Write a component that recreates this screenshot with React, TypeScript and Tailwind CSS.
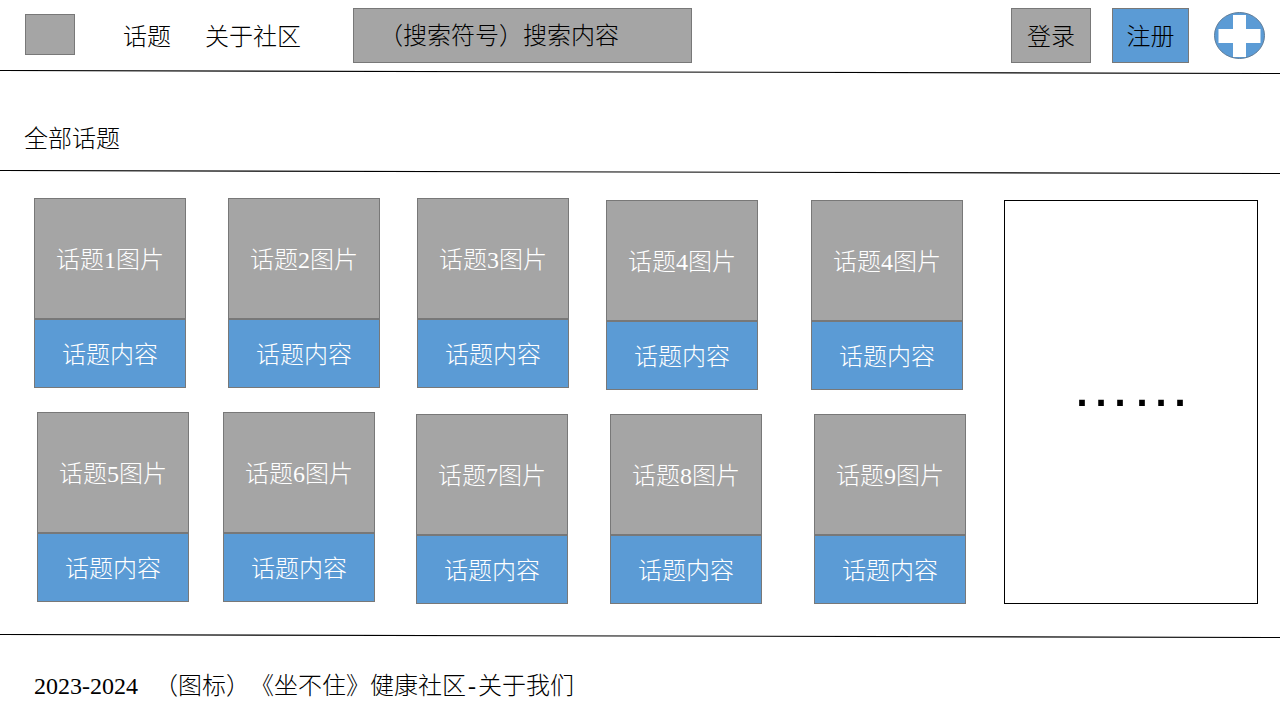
type Topic = { title: string; align: "self-start" | "self-end" };

const firstRow: Topic[] = [
  { title: "话题1图片", align: "self-start" },
  { title: "话题2图片", align: "self-start" },
  { title: "话题3图片", align: "self-start" },
  { title: "话题4图片", align: "self-end" },
  { title: "话题4图片", align: "self-end" },
];

const secondRow: Topic[] = [
  { title: "话题5图片", align: "self-start" },
  { title: "话题6图片", align: "self-start" },
  { title: "话题7图片", align: "self-end" },
  { title: "话题8图片", align: "self-end" },
  { title: "话题9图片", align: "self-end" },
];

function Divider() {
  return (
    <svg className="block h-1 w-full" viewBox="0 0 1280 4" preserveAspectRatio="none" aria-hidden="true">
      <line x1="0" y1="0.5" x2="1280" y2="3.5" stroke="#000" strokeWidth="1.1" />
    </svg>
  );
}

function TopicCard({ title, align }: Topic) {
  return (
    <article className={`w-[152px] text-center text-white ${align}`}>
      <div className="flex h-[121px] items-center justify-center border border-[#787878] bg-[#a5a5a5] pt-0.5">
        {title}
      </div>
      <a
        href="#topic"
        className="flex h-[69px] items-center justify-center border border-[#787878] bg-[#5b9bd5] pt-0.5"
      >
        话题内容
      </a>
    </article>
  );
}

export default function App() {
  return (
    <div className="bg-white font-['Liberation_Serif','Noto_Sans_CJK_SC',serif] text-2xl font-light whitespace-nowrap text-black [text-spacing-trim:space-all]">
      <header className="flex h-[70px] items-start pt-2 pr-[15px] pl-[25px]">
        <a href="#home" aria-label="首页" className="mt-1.5 h-[41px] w-[50px] border border-[#787878] bg-[#a5a5a5]" />
        <nav className="ml-12 flex h-[55px] items-center gap-[34px] pt-0.5">
          <a href="#topics">话题</a>
          <a href="#community">关于社区</a>
        </nav>
        <input
          type="search"
          aria-label="搜索内容"
          placeholder="（搜索符号）搜索内容"
          className="ml-[52px] h-[55px] w-[339px] border border-[#787878] bg-[#a5a5a5] px-[25px] pt-0.5 placeholder:text-black placeholder:opacity-100"
        />
        <div className="ml-auto flex items-center">
          <button type="button" className="h-[55px] w-20 border border-[#787878] bg-[#a5a5a5] pt-0.5">
            登录
          </button>
          <button type="button" className="ml-[21px] h-[55px] w-[77px] border border-[#787878] bg-[#5b9bd5] pt-0.5">
            注册
          </button>
          <button type="button" aria-label="发布" className="ml-[25px]">
            <svg className="block h-[47px] w-[51px]" viewBox="0 0 51 47" aria-hidden="true">
              <ellipse cx="25.5" cy="23.5" rx="25" ry="23" fill="#5b9bd5" stroke="#5f7c98" />
              <path d="M19 3h13v14h14.5v14H32v14H19V31H4.500V17H19z" fill="#fff" />
            </svg>
          </button>
        </div>
      </header>
      <Divider />
      <h1 className="flex h-24 items-center pt-[34px] pl-6">全部话题</h1>
      <Divider />
      <main className="flex items-start pt-6 pr-[22px] pb-[30px] pl-[34px]">
        <section aria-label="全部话题" className="flex-1">
          <div className="grid h-48 grid-cols-[194fr_189fr_189fr_205fr_152px] pr-[3px]">
            {firstRow.map((topic, i) => (
              <TopicCard key={i} {...topic} />
            ))}
          </div>
          <div className="mt-[22px] grid h-48 grid-cols-[186fr_193fr_194fr_204fr_152px] pl-[3px]">
            {secondRow.map((topic, i) => (
              <TopicCard key={i} {...topic} />
            ))}
          </div>
        </section>
        <aside className="mt-0.5 ml-[38px] flex h-[404px] w-[254px] items-center justify-center border border-black pb-8 font-['Liberation_Sans',sans-serif] text-6xl font-normal">
          ……
        </aside>
      </main>
      <Divider />
      <footer className="flex items-center pt-8 pb-3.5 pl-[34px]">
        <span className="w-[120px]">2023-2024</span>
        <span>（图标）《坐不住》健康社区</span>
        <span className="px-0.5">-</span>
        <a href="#about">关于我们</a>
      </footer>
    </div>
  );
}
